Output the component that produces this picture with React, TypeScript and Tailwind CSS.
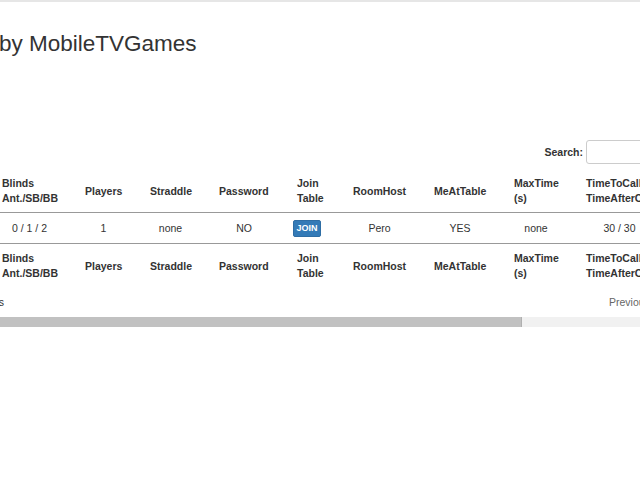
import React from "react";

const headers: { label: React.ReactNode; w: string }[] = [
  { label: <>Blinds<br />Ant./SB/BB</>, w: "w-[83px]" },
  { label: "Players", w: "w-[65px]" },
  { label: "Straddle", w: "w-[69px]" },
  { label: "Password", w: "w-[78px]" },
  { label: <>Join<br />Table</>, w: "w-[56px]" },
  { label: "RoomHost", w: "w-[81px]" },
  { label: "MeAtTable", w: "w-[80px]" },
  { label: <>MaxTime<br />(s)</>, w: "w-[72px]" },
  { label: <>TimeToCall/<br />TimeAfterCall</>, w: "w-[95px]" },
];

function HeadRow({ foot }: { foot?: boolean }) {
  return (
    <tr className={foot ? "" : "border-b border-[#999]"}>
      {headers.map((h, i) => (
        <th
          key={i}
          className={`${h.w} px-[14px] ${foot ? "pt-[7px] pb-[4px]" : "pt-[7px] pb-[6px]"} text-left align-middle font-bold whitespace-nowrap overflow-hidden`}
        >
          {h.label}
        </th>
      ))}
    </tr>
  );
}

export default function App() {
  const cells = ["0 / 1 / 2", "1", "none", "NO", "join", "Pero", "YES", "none", "30 / 30"];

  return (
    <div className="w-[640px] h-[480px] overflow-hidden bg-white text-[#333] font-['Liberation_Sans',Arial,sans-serif]">
      <div className="h-[2px] bg-[#e6e6e6]" />

      <h2 className="mt-[29px] -ml-[1px] text-[22.5px] leading-[25px] font-normal whitespace-nowrap">by MobileTVGames</h2>

      <div className="mt-[84px] flex justify-end items-center h-[24px]">
        <label className="font-bold text-[10.5px] leading-[15px] mr-[3px]">Search:</label>
        <input
          type="search"
          className="w-[100px] -mr-[46px] h-[24px] border border-[#ccc] rounded-[3px] bg-white outline-none shrink-0"
        />
      </div>

      <div className="mt-[5px] -ml-[12px]">
        <table className="table-fixed w-[679px] text-[10.5px] leading-[15px]">
          <thead>
            <HeadRow />
          </thead>
          <tbody>
            <tr className="border-b border-[#999]">
              {cells.map((c, i) => (
                <td key={i} className="px-[10px] pt-[7px] pb-[6px] text-center align-middle whitespace-nowrap">
                  {c === "join" ? (
                    <button className="inline-block align-middle mr-[8px] bg-[#337ab7] text-white font-bold text-[9px] leading-[13px] px-[2px] py-[1px] rounded-[2px] border border-[#2e6da4]">
                      JOIN
                    </button>
                  ) : (
                    c
                  )}
                </td>
              ))}
            </tr>
          </tbody>
          <tfoot>
            <HeadRow foot />
          </tfoot>
        </table>
      </div>

      <div className="mt-[10px] flex justify-between text-[10.5px] leading-[15px]">
        <div className="w-[4px] flex justify-end whitespace-nowrap">Showing 1 to 1 of 1 entries</div>
        <div className="w-[31px] flex gap-[10px] whitespace-nowrap text-[#666]">
          <span>Previous</span>
          <span>1</span>
          <span>Next</span>
        </div>
      </div>

      <div className="mt-[7px] flex h-[10px]">
        <div className="w-[522px] bg-[#c1c1c1] border-r border-[#b0b0b0]" />
        <div className="flex-1 bg-[#f1f1f1]" />
      </div>
    </div>
  );
}
